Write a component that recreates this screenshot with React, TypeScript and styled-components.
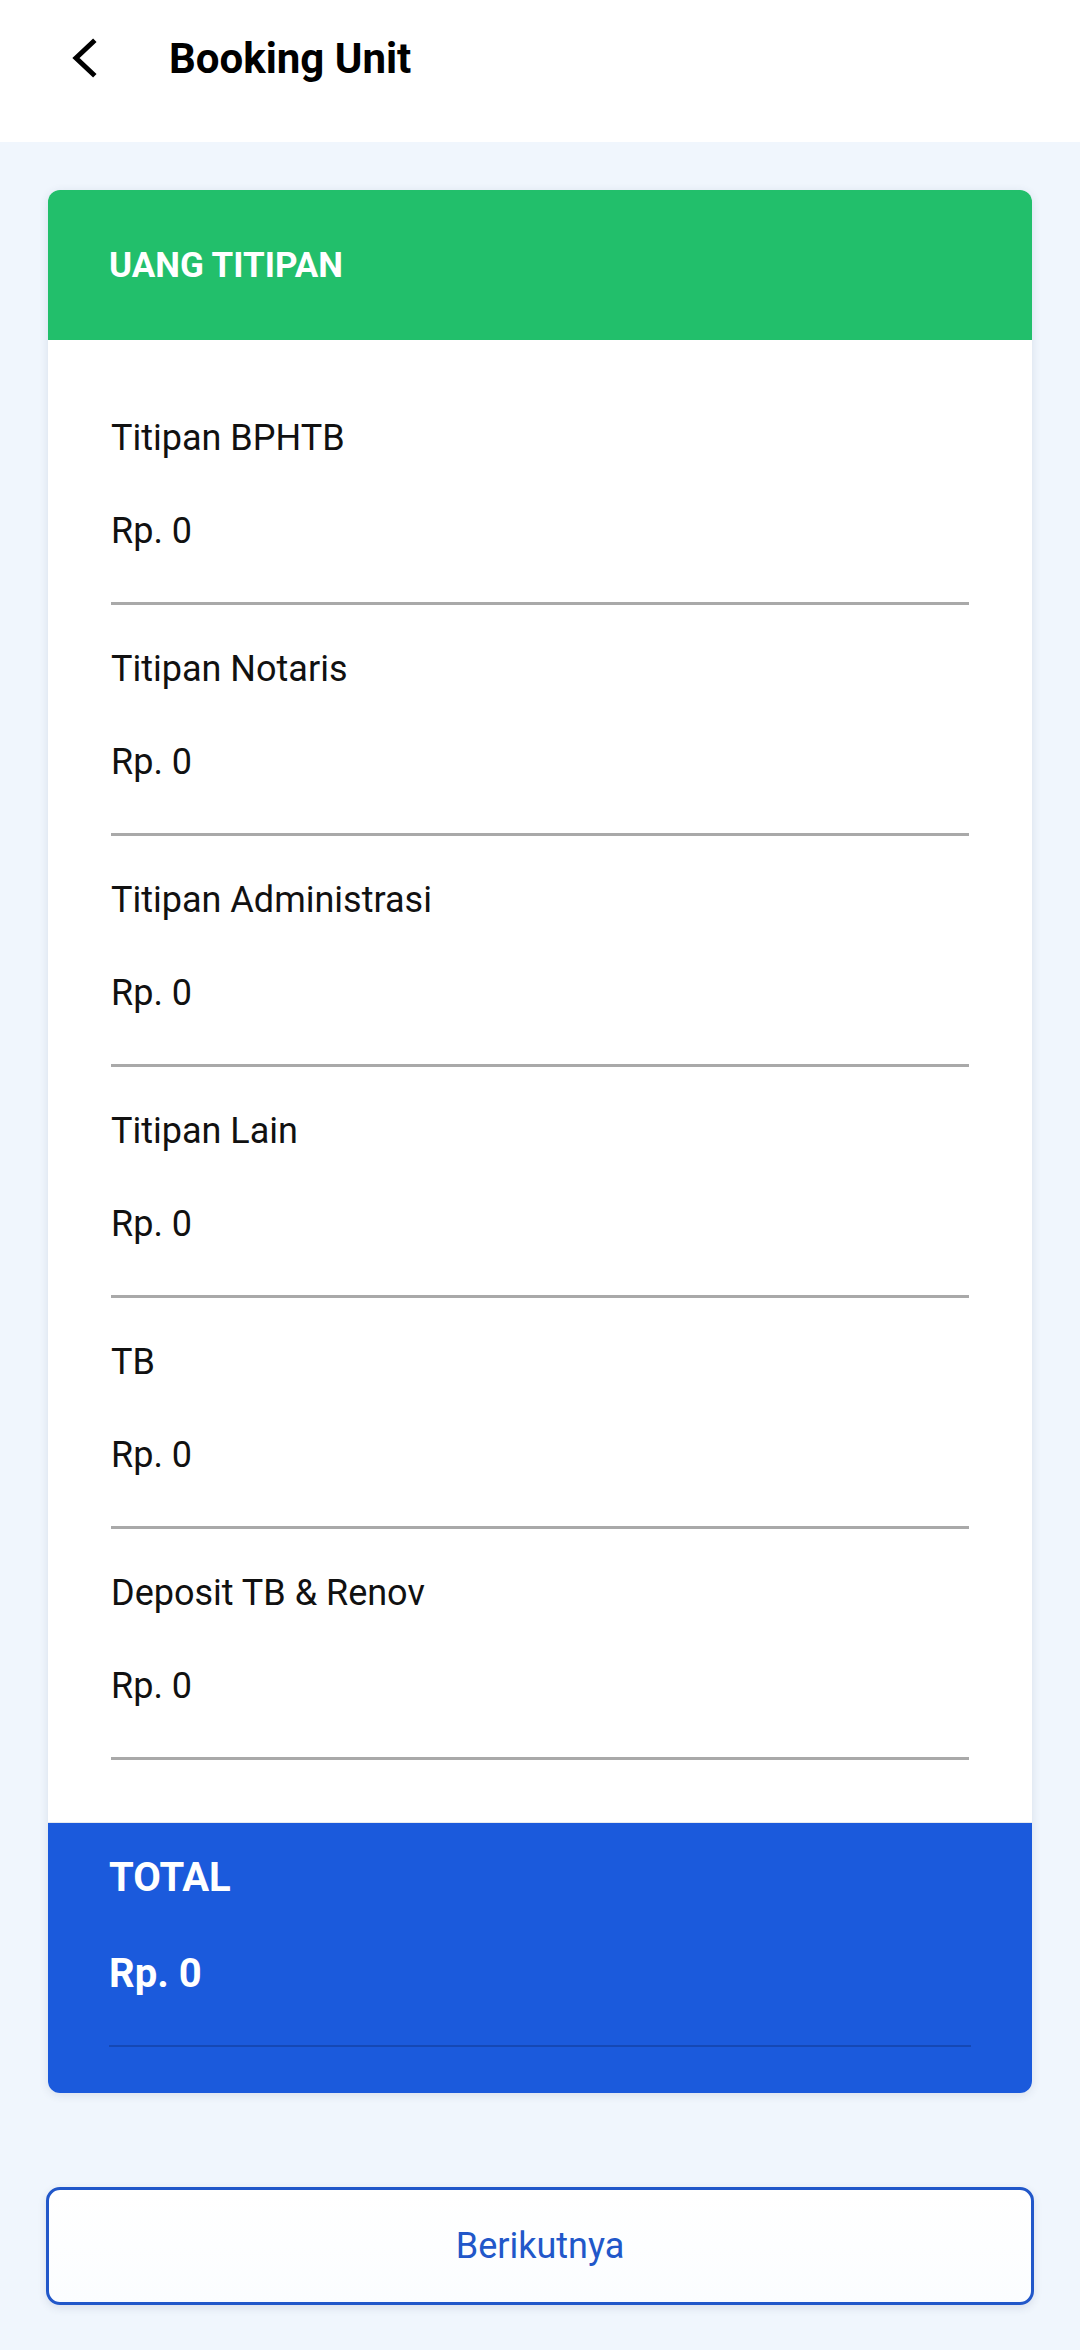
import React from "react";
import styled, { createGlobalStyle } from "styled-components";

const Global = createGlobalStyle`
  html, body { margin: 0; padding: 0; background: #f0f6fd; }
  body { font-family: Roboto, "Noto Sans", "Liberation Sans", sans-serif; -webkit-font-smoothing: antialiased; }
  * { box-sizing: border-box; }
`;

const Page = styled.div`
  width: 1080px;
  min-height: 2350px;
  background: #f0f6fd;
  display: flex;
  flex-direction: column;
`;

const TopBar = styled.header`
  height: 142px;
  background: #ffffff;
  display: flex;
  align-items: flex-start;
  padding: 38px 0 0 66px;
  gap: 69px;
`;

const BackButton = styled.button`
  width: 34px;
  height: 40px;
  border: none;
  background: none;
  padding: 0;
  display: flex;
  align-items: center;
  justify-content: center;
  cursor: pointer;
`;

const Title = styled.h1`
  margin: 0;
  font-size: 42px;
  line-height: 42px;
  font-weight: 700;
  color: #000;
`;

const Content = styled.main`
  display: flex;
  flex-direction: column;
  padding: 48px 48px 0 48px;
`;

const Card = styled.section`
  border-radius: 12px;
  overflow: hidden;
  background: #ffffff;
  box-shadow: 0 2px 10px rgba(40, 60, 100, 0.12);
`;

const CardHead = styled.div`
  height: 150px;
  background: #22bf6b;
  display: flex;
  align-items: center;
  padding: 0 61px;
`;

const CardTitle = styled.h2`
  margin: 0;
  font-size: 35px;
  font-weight: 700;
  color: #ffffff;
  letter-spacing: 0;
`;

const CardBody = styled.div`
  padding: 34px 63px 62px 63px;
  display: flex;
  flex-direction: column;
  border-bottom: 1px solid #e6eaf0;
`;

const Row = styled.div`
  padding-top: 43px;
  display: flex;
  flex-direction: column;
`;

const Label = styled.div`
  font-size: 36px;
  line-height: 42px;
  color: #111;
`;

const Value = styled.div`
  margin-top: 51px;
  font-size: 36px;
  line-height: 42px;
  color: #111;
`;

const Divider = styled.div<{ $color?: string; $h?: number }>`
  margin-top: ${(p) => (p.$h === 2 ? 48 : 50)}px;
  height: ${(p) => p.$h ?? 3}px;
  background: ${(p) => p.$color ?? "#a9a9a9"};
`;

const TotalBox = styled.div`
  background: #1b5adc;
  padding: 31px 61px 46px 61px;
  display: flex;
  flex-direction: column;
`;

const TotalLabel = styled.div`
  font-size: 40px;
  line-height: 47px;
  font-weight: 700;
  color: #fff;
`;

const TotalValue = styled.div`
  margin-top: 49px;
  font-size: 40px;
  line-height: 47px;
  font-weight: 700;
  color: #fff;
`;

const NextButton = styled.button`
  margin: 94px -2px 0 -2px;
  height: 118px;
  border: 3px solid #2157c9;
  border-radius: 14px;
  background: linear-gradient(#ffffff, #fbfdff);
  box-shadow: 0 3px 8px rgba(40, 60, 100, 0.12);
  font-family: Roboto, "Noto Sans", sans-serif;
  font-size: 36px;
  color: #2157c9;
  cursor: pointer;
`;

const items = [
  "Titipan BPHTB",
  "Titipan Notaris",
  "Titipan Administrasi",
  "Titipan Lain",
  "TB",
  "Deposit TB & Renov",
];

export default function App() {
  return (
    <Page>
      <Global />
      <TopBar>
        <BackButton aria-label="Kembali">
          <svg width="34" height="40" viewBox="0 0 34 40">
            <path d="M27 4 L10 20 L27 36" fill="none" stroke="#000" strokeWidth="5" strokeLinecap="square" strokeLinejoin="miter" />
          </svg>
        </BackButton>
        <Title>Booking Unit</Title>
      </TopBar>
      <Content>
        <Card>
          <CardHead>
            <CardTitle>UANG TITIPAN</CardTitle>
          </CardHead>
          <CardBody>
            {items.map((it) => (
              <Row key={it}>
                <Label>{it}</Label>
                <Value>Rp. 0</Value>
                <Divider />
              </Row>
            ))}
          </CardBody>
          <TotalBox>
            <TotalLabel>TOTAL</TotalLabel>
            <TotalValue>Rp. 0</TotalValue>
            <Divider $color="#1548b5" $h={2} />
          </TotalBox>
        </Card>
        <NextButton>Berikutnya</NextButton>
      </Content>
    </Page>
  );
}
